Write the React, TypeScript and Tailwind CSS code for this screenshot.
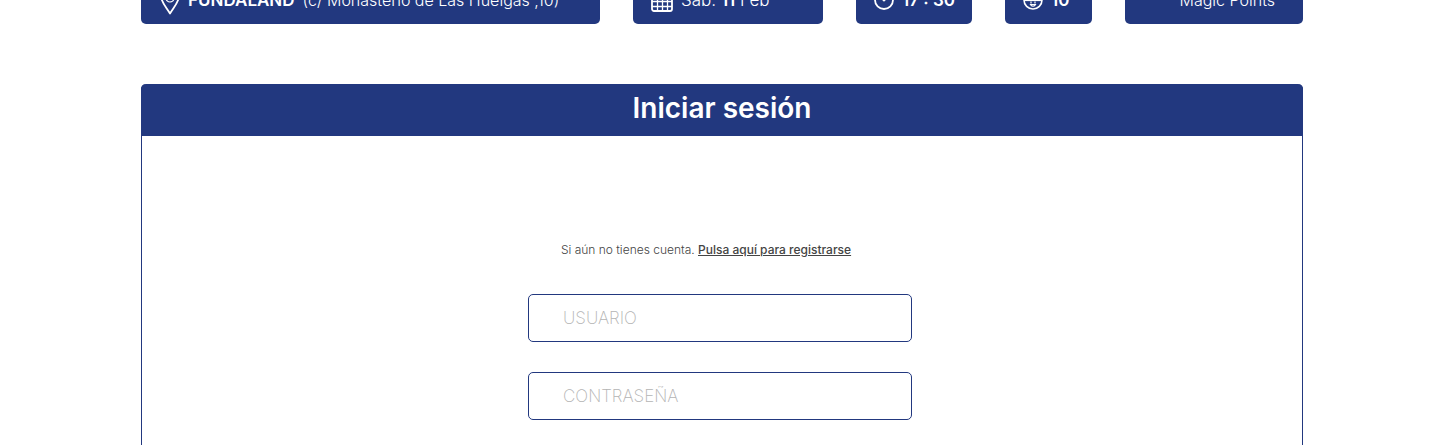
import type { ReactNode } from "react";

function PinIcon() {
  return (
    <svg width="20" height="30" viewBox="0 0 20 30" fill="none" stroke="currentColor" strokeWidth="1.8" strokeLinejoin="round" aria-hidden="true">
      <path d="M10 28.500C6.500 22.500 1 17 1 11a9 9 0 0 1 18 0c0 6-5.500 11.500-9 17.500Z" />
      <circle cx="10" cy="13" r="4" strokeWidth="1.200" />
    </svg>
  );
}

function CalendarIcon() {
  return (
    <svg width="22" height="24" viewBox="0 0 22 24" fill="none" stroke="currentColor" aria-hidden="true">
      <rect x="1" y="3" width="20" height="20" rx="2" strokeWidth="1.800" />
      <path d="M1 8.500h20M1 13.500h20M1 18.500h20M6.500 8v15M11.500 8v15M16.500 8v15M6 0v5M16 0v5" strokeWidth="1.300" />
    </svg>
  );
}

function ClockIcon() {
  return (
    <svg width="20" height="20" viewBox="0 0 20 20" fill="none" stroke="currentColor" strokeWidth="1.800" aria-hidden="true">
      <circle cx="10" cy="10" r="9" />
      <path d="M10 4v7M8 9l2 2 2-2" strokeWidth="1.200" />
    </svg>
  );
}

function ChildIcon() {
  return (
    <svg width="20" height="20" viewBox="0 0 20 20" fill="none" stroke="currentColor" strokeWidth="1.600" aria-hidden="true">
      <circle cx="10" cy="10" r="9" />
      <path d="M1 10.500h18" strokeWidth="1.200" />
      <path d="M8 11.500v2M12 11.500v2M7.500 14.500c1 2.200 4 2.200 5 0Z" strokeWidth="1.200" />
    </svg>
  );
}

function Summary({ className, children }: { className: string; children: ReactNode }) {
  return (
    <li className={`flex h-12 items-center whitespace-nowrap rounded-[5px] bg-[#22387f] ${className}`}>
      {children}
    </li>
  );
}

function Field({ label, type, name }: { label: string; type: string; name: string }) {
  return (
    <input
      aria-label={label}
      placeholder={label}
      type={type}
      name={name}
      className="h-12 w-full rounded-[5px] border border-[#22387f] bg-white pr-4 pl-[34px] text-[17px] font-extralight text-gray-700 outline-none placeholder:text-[#b4b4b4]"
    />
  );
}

export default function App() {
  return (
    <main className="flex min-h-screen flex-col overflow-hidden bg-white pr-[137px] pl-[141px] font-['Inter','Liberation_Sans',sans-serif]">
      <ul className="-mt-6 flex gap-[33px] text-[17px] font-light text-white">
        <Summary className="flex-1 gap-2 pl-[19px]">
          <PinIcon />
          <span className="pt-0.5 text-base"><strong className="mr-2 text-[17px] font-semibold">FUNDALAND</strong>(c/ Monasterio de Las Huelgas ,10)</span>
        </Summary>
        <Summary className="w-[190px] gap-2 pl-[18px]">
          <CalendarIcon />
          <span className="pt-0.5">Sab. <strong className="font-semibold">11</strong> Feb</span>
        </Summary>
        <Summary className="w-[116px] gap-2 pl-[18px] font-semibold">
          <ClockIcon />
          <span className="pt-0.5">17 : 30</span>
        </Summary>
        <Summary className="w-[87px] gap-2 pl-[18px] font-semibold">
          <ChildIcon />
          <span className="pt-0.5">10</span>
        </Summary>
        <Summary className="w-[178px] justify-end pr-7">
          <span className="text-base">Magic Points</span>
        </Summary>
      </ul>

      <section className="mt-[60px] flex flex-1 flex-col rounded-t-[5px] border-x border-[#22387f]">
        <h1 className="-mx-px flex h-[52px] items-center justify-center rounded-t-[5px] bg-[#22387f] pb-1 text-[28px] font-semibold text-white">
          Iniciar sesión
        </h1>
        <form className="mr-1 flex flex-col items-center pt-[104px]">
          <p className="mr-7 text-xs leading-5 font-light text-[#444444]">
            Si aún no tienes cuenta.{" "}
            <a href="#registro" className="font-medium underline">Pulsa aquí para registrarse</a>
          </p>
          <div className="mt-[34px] flex w-full max-w-96 flex-col gap-[30px]">
            <Field label="USUARIO" type="text" name="usuario" />
            <Field label="CONTRASEÑA" type="password" name="contrasena" />
          </div>
        </form>
      </section>
    </main>
  );
}
